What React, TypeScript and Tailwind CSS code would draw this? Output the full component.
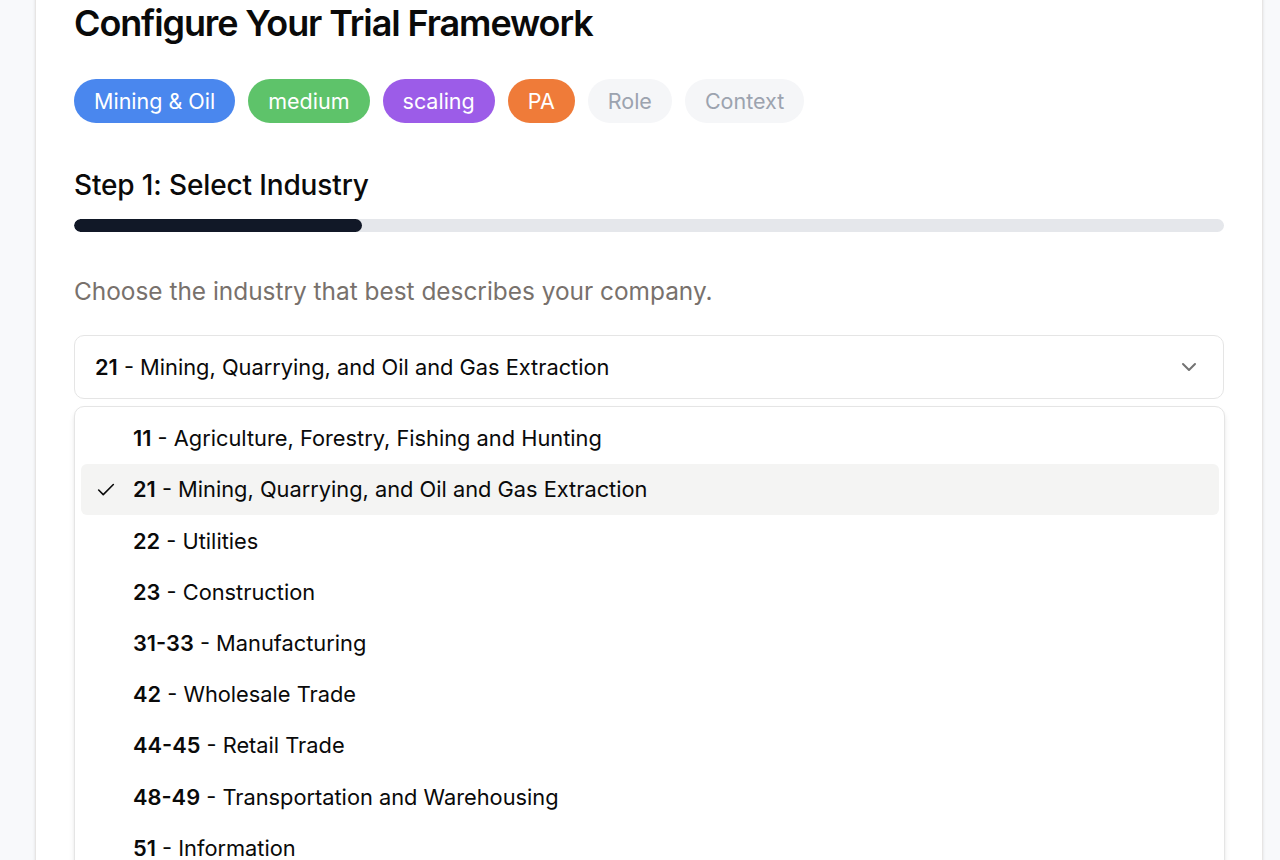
import { Check, ChevronDown } from 'lucide-react';

const badges = [
  { label: 'Mining & Oil', cls: 'bg-[#4a87ee] text-white' },
  { label: 'medium', cls: 'bg-[#5ec36a] text-white' },
  { label: 'scaling', cls: 'bg-[#9c5ce8] text-white' },
  { label: 'PA', cls: 'bg-[#ef7b39] text-white' },
  { label: 'Role', cls: 'bg-[#f5f6f8] text-[#9ca3af]' },
  { label: 'Context', cls: 'bg-[#f5f6f8] text-[#9ca3af]' },
];

const industries = [
  ['11', 'Agriculture, Forestry, Fishing and Hunting'],
  ['21', 'Mining, Quarrying, and Oil and Gas Extraction'],
  ['22', 'Utilities'],
  ['23', 'Construction'],
  ['31-33', 'Manufacturing'],
  ['42', 'Wholesale Trade'],
  ['44-45', 'Retail Trade'],
  ['48-49', 'Transportation and Warehousing'],
  ['51', 'Information'],
  ['52', 'Finance and Insurance'],
];

export default function App() {
  return (
    <div className="h-[860px] overflow-hidden bg-[#f8f9fb] font-['Inter',sans-serif] text-[#0a0a0a]">
      <div className="-mt-9 ml-[35px] w-[1228px] min-h-[1000px] border border-[#e7e5e4] bg-white p-[38px] shadow-sm">
        <h1 className="text-[36px] font-semibold leading-10 tracking-[-0.031em]">Configure Your Trial Framework</h1>

        <div className="mt-9 flex gap-[13px]">
          {badges.map((b) => (
            <span key={b.label} className={`flex h-11 items-center rounded-full px-[20px] text-[21.5px] ${b.cls}`}>
              {b.label}
            </span>
          ))}
        </div>

        <h2 className="mt-[44px] text-[28px] font-medium leading-9 tracking-[-0.005em]">Step 1: Select Industry</h2>
        <div className="mt-[16px] h-[13px] w-full overflow-hidden rounded-full bg-[#e5e7eb]">
          <div className="h-full w-1/4 rounded-full bg-[#111827]" />
        </div>

        <p className="mt-[43px] text-[24.4px] leading-8 text-[#78716c]">Choose the industry that best describes your company.</p>

        <div className="mt-[28px] flex h-16 items-center justify-between rounded-[10px] border border-[#e5e5e5] pl-5 pr-[22px] text-[21.8px]">
          <span>
            <span className="font-semibold">21</span> - Mining, Quarrying, and Oil and Gas Extraction
          </span>
          <ChevronDown className="h-6 w-6 text-[#737373]" strokeWidth={2} />
        </div>

        <div className="mt-[7px] -mr-px rounded-[10px] border border-[#e5e5e5] bg-white py-1.5 pl-1.5 pr-[5px] shadow-md">
          {industries.map(([code, name]) => {
            const selected = code === '21';
            return (
              <div
                key={code}
                className={`flex h-[51.2px] items-center rounded-md text-[21.8px] ${selected ? 'bg-[#f4f4f3]' : ''}`}
              >
                <span className="flex w-[52px] justify-center pr-[2px]">
                  {selected && <Check className="h-[22px] w-[22px]" strokeWidth={1.75} />}
                </span>
                <span>
                  <span className="font-semibold">{code}</span> - {name}
                </span>
              </div>
            );
          })}
        </div>
      </div>
    </div>
  );
}
